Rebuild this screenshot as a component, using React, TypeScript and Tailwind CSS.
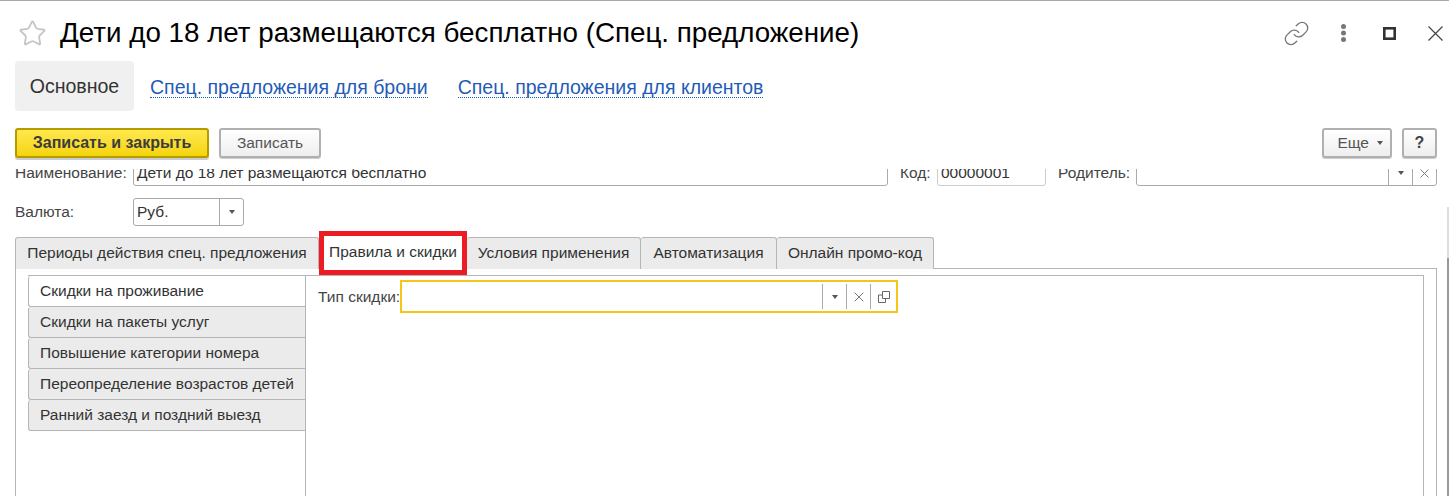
import { Link, Star, X } from 'lucide-react';

const font = 'font-["Liberation_Sans",sans-serif]';

const tabs = [
  { label: 'Периоды действия спец. предложения', w: 'w-[304px]' },
  { label: 'Правила и скидки', w: 'w-[148px]', active: true },
  { label: 'Условия применения', w: 'w-[174px]' },
  { label: 'Автоматизация', w: 'w-[136px]' },
  { label: 'Онлайн промо-код', w: 'w-[157px]' },
];

const sideTabs = [
  'Скидки на проживание',
  'Скидки на пакеты услуг',
  'Повышение категории номера',
  'Переопределение возрастов детей',
  'Ранний заезд и поздний выезд',
];

function Caret() {
  return <span className="block h-0 w-0 border-x-[3px] border-t-[4px] border-x-transparent border-t-[#555]" />;
}

export default function App() {
  return (
    <div className={`${font} relative h-[496px] w-[1449px] overflow-hidden border-t border-[#a9a9a9] bg-white text-[#333]`}>
      {/* заголовок окна */}
      <div className="flex h-[60px] items-center pl-[18px] pr-[6px] pt-[4px]">
        <Star className="h-[29px] w-[29px] text-[#c3c7cb]" strokeWidth={1.5} />
        <h1 className="ml-[13px] text-[27.75px] leading-none text-black">Дети до 18 лет размещаются бесплатно (Спец. предложение)</h1>
        <div className="ml-auto flex items-center">
          <Link className="h-[27px] w-[27px] text-[#777]" strokeWidth={1.2} />
          <svg className="ml-[31px]" width="5" height="18" viewBox="0 0 5 18" fill="#777">
            <circle cx="2.500" cy="2.500" r="2.500" />
            <circle cx="2.500" cy="9" r="2.500" />
            <circle cx="2.500" cy="15.500" r="2.500" />
          </svg>
          <svg className="ml-[37px]" width="13" height="13" viewBox="0 0 13 13" fill="none" stroke="#333" strokeWidth="2.600">
            <rect x="1.300" y="1.300" width="10.400" height="10.400" />
          </svg>
          <svg className="ml-[32px]" width="15" height="15" viewBox="0 0 15 15" fill="none" stroke="#444" strokeWidth="1.200">
            <path d="M.5.5l14 14M14.500.5l-14 14" />
          </svg>
        </div>
      </div>

      {/* навигация */}
      <div className="flex h-[50px] items-center pl-[15px] text-[19.5px]">
        <div className="flex h-[50px] w-[119px] items-center justify-center rounded-[4px] bg-[#f0f0f0] pt-[1px]">Основное</div>
        <a className="ml-[16px] mt-[2px] border-b border-dotted border-[#1b5fc4] leading-[20px] text-[#1f5cb8]">Спец. предложения для брони</a>
        <a className="ml-[30px] mt-[2px] border-b border-dotted border-[#1b5fc4] leading-[20px] text-[#1f5cb8]">Спец. предложения для клиентов</a>
      </div>

      {/* командная панель */}
      <div className="mt-[17px] flex h-[30px] items-start px-[12px] pl-[15px] text-[15.5px]">
        <button className="h-[30px] w-[194px] rounded-[3px] border-2 border-[#b39b00] bg-gradient-to-b from-[#ffe84a] to-[#f5d400] text-[16px] font-bold text-[#3c3c3c] shadow-[0_2px_0_#ccc]">Записать и закрыть</button>
        <button className="ml-[10px] h-[30px] w-[102px] rounded-[3px] border-2 border-[#b0b0b0] bg-gradient-to-b from-white to-[#eee] text-[#555] shadow-[0_1px_0_#ccc]">Записать</button>
        <button className="ml-auto flex h-[30px] w-[70px] items-center justify-end gap-[8px] rounded-[3px] border-2 border-[#b0b0b0] bg-gradient-to-b from-white to-[#eee] pr-[7px] text-[#555] shadow-[0_1px_0_#ccc]">Еще <Caret /></button>
        <button className="ml-[10px] h-[30px] w-[35px] rounded-[3px] border-2 border-[#b0b0b0] bg-gradient-to-b from-white to-[#eee] text-[16px] font-bold text-[#444] shadow-[0_1px_0_#ccc]">?</button>
      </div>

      {/* прокручиваемая форма */}
      <div className="mt-[11px] h-[327px] overflow-hidden text-[15.5px]">
        <div className="-mt-[9px] pl-[15px]">
          <div className="flex h-[26px] items-center">
            <span className="w-[118px] text-[#444]">Наименование:</span>
            <div className="flex h-[26px] w-[755px] items-center rounded-[3px] border border-[#aaa] pl-[3px]">Дети до 18 лет размещаются бесплатно</div>
            <span className="ml-[12px] w-[37px] text-[#444]">Код:</span>
            <div className="flex h-[26px] w-[109px] items-center rounded-[3px] border border-[#ccc] pl-[3px]">00000001</div>
            <span className="ml-[12px] w-[78px] text-[#444]">Родитель:</span>
            <div className="flex h-[26px] w-[301px] items-center justify-end rounded-[3px] border border-[#aaa]">
              <span className="flex h-full w-[24px] items-center justify-center border-l border-[#aaa]"><Caret /></span>
              <span className="flex h-full w-[24px] items-center justify-center border-l border-[#aaa]"><X className="h-[15px] w-[15px] text-[#777]" strokeWidth={1.5} /></span>
            </div>
          </div>

          <div className="mt-[12px] flex h-[28px] items-center">
            <span className="w-[118px] text-[#444]">Валюта:</span>
            <div className="flex h-[28px] w-[111px] items-center rounded-[3px] border border-[#aaa] pl-[3px]">
              Руб.
              <span className="ml-auto flex h-full w-[24px] items-center justify-center border-l border-[#aaa]"><Caret /></span>
            </div>
          </div>

          {/* вкладки */}
          <div className="mt-[11px] flex h-[32px] w-[1422px] border-b border-[#b5b5b5]">
            {tabs.map(t => (
              <div
                key={t.label}
                className={`relative flex h-[32px] shrink-0 items-center justify-center rounded-t-[3px] pb-[2px] ${t.w} ${t.active ? 'bg-white' : 'border-r border-t border-[#b5b5b5] bg-[#ebebeb] first:border-l'}`}
              >
                {t.label}
                {t.active && <span className="absolute inset-x-0 -bottom-[6px] -top-[6px] border-[5px] border-[#ed1c24]" />}
              </div>
            ))}
          </div>

          {/* содержимое вкладки */}
          <div className="flex h-[300px] w-[1422px] border-x border-[#b5b5b5] pl-[12px] pr-[12px] pt-[6px]">
            <div className="w-[278px] shrink-0 border-r border-t border-[#b5b5b5]">
              {sideTabs.map((s, i) => (
                <div
                  key={s}
                  className={`flex h-[31px] items-center whitespace-nowrap rounded-l-[3px] border-b border-l border-[#b5b5b5] pl-[11px] ${i === 0 ? 'bg-white' : 'bg-[#ebebeb]'}`}
                >
                  {s}
                </div>
              ))}
            </div>
            <div className="flex-1 border-r border-t border-[#b5b5b5] pl-[12px] pt-[4px]">
              <div className="flex items-center">
                <span className="w-[82px] whitespace-nowrap text-[#444]">Тип скидки:</span>
                <div className="flex h-[33px] w-[498px] items-center justify-end border-2 border-[#f5c518] py-[2px]">
                  <span className="flex h-full w-[24px] items-center justify-center border-l border-[#aaa]"><Caret /></span>
                  <span className="flex h-full w-[24px] items-center justify-center border-l border-[#aaa]"><X className="h-[16px] w-[16px] text-[#777]" strokeWidth={1.5} /></span>
                  <span className="flex h-full w-[26px] items-center justify-center border-l border-[#aaa]">
                    <svg width="12" height="12" viewBox="0 0 12 12" fill="none" stroke="#666">
                      <path d="M4.500.5h7v7h-7z" />
                      <path d="M4 4H.5v7.500h7V8" />
                    </svg>
                  </span>
                </div>
              </div>
            </div>
          </div>
        </div>
      </div>

      {/* полоса прокрутки */}
      <div className="absolute right-0 top-[206px] h-[51px] w-[2px] bg-[#ddd]" />
      <div className="absolute bottom-0 right-0 top-[257px] w-[2px] bg-[#999]" />
    </div>
  );
}
